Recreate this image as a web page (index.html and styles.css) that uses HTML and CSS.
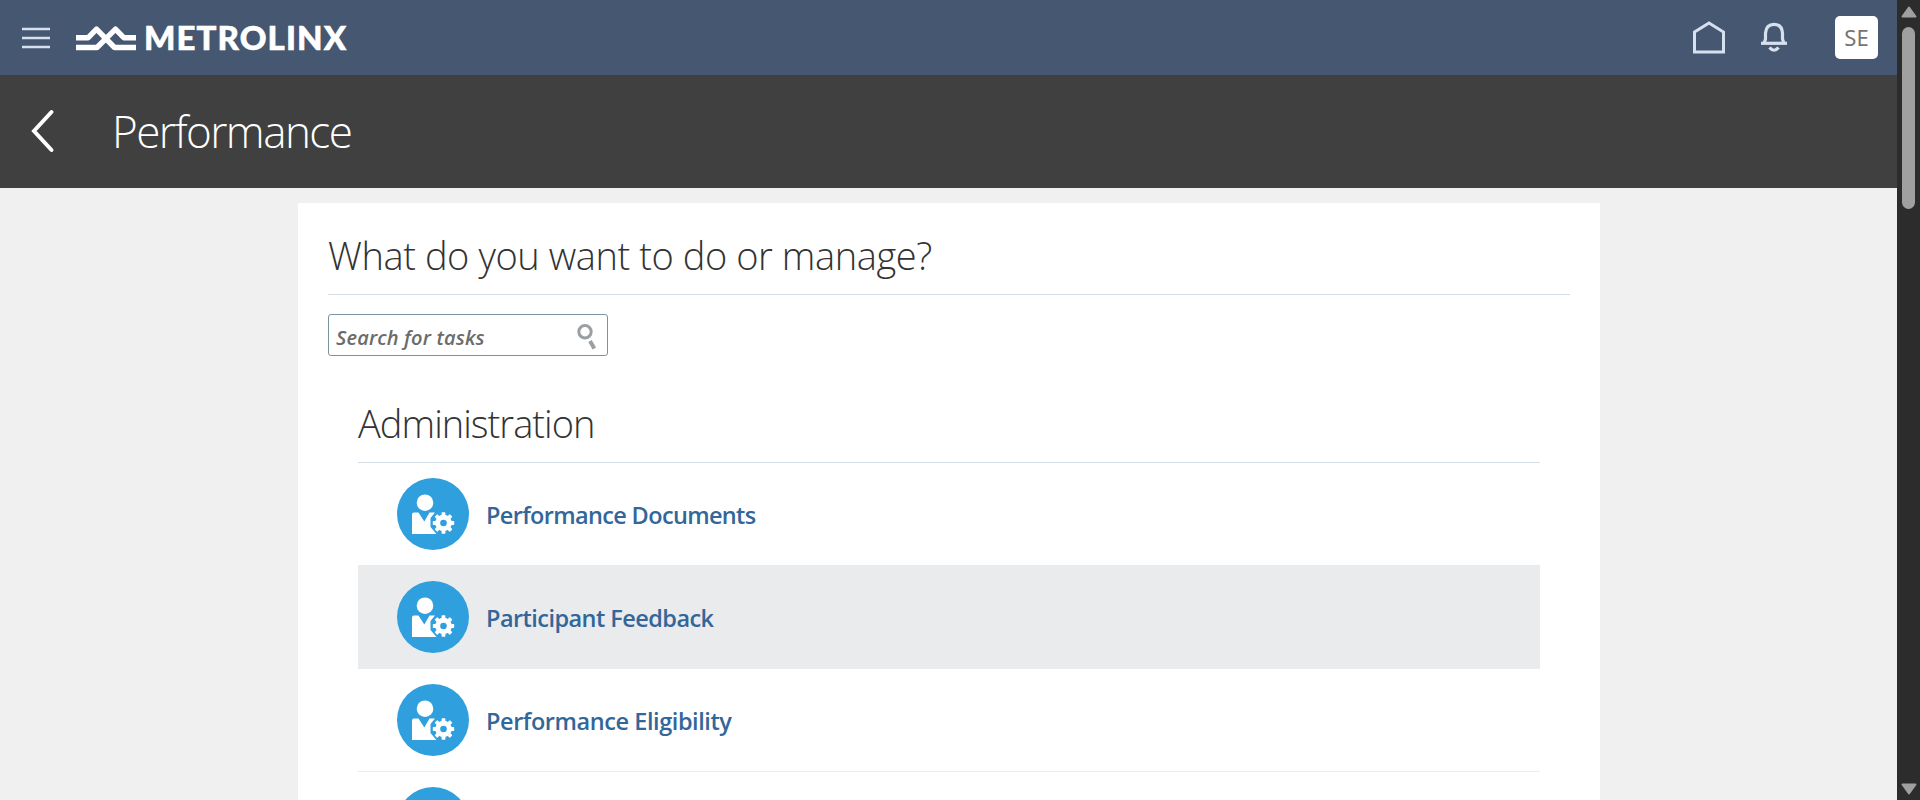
FILE: index.html
```html
<!DOCTYPE html>
<html lang="en">
<head>
<meta charset="utf-8">
<title>Performance</title>
<link rel="stylesheet" href="styles.css">
</head>
<body>
<svg class="defs" width="0" height="0" aria-hidden="true">
  <symbol id="person-gear" viewBox="0 0 72 72">
    <circle cx="36" cy="36" r="36" fill="#309fdd"/>
    <circle cx="28" cy="24.700" r="8.300" fill="#fff"/>
    <path d="M15 56V36.500Q15 34.500 17 34.500H21.500L27.300 43.500L32.500 34.500H38L33.500 40V49L39.500 56Z" fill="#fff"/>
    <g fill="#fff" transform="translate(46.500 45)">
      <circle r="8.300"/>
      <g><rect x="-1.900" y="-10.700" width="3.800" height="21.400" rx=".6"/><rect x="-10.700" y="-1.900" width="21.400" height="3.800" rx=".6"/></g>
      <g transform="rotate(45)"><rect x="-1.900" y="-10.700" width="3.800" height="21.400" rx=".6"/><rect x="-10.700" y="-1.900" width="21.400" height="3.800" rx=".6"/></g>
      <circle r="3.300" fill="#309fdd"/>
    </g>
  </symbol>
</svg>
<div class="screen">
  <div class="app">
    <header class="topbar">
      <svg class="menu" width="28" height="22" viewBox="0 0 28 22"><path d="M0 2H28M0 11H28M0 20H28" stroke="#d7e0ee" stroke-width="2.600"/></svg>
      <svg class="mark" width="62" height="28" viewBox="0 0 62 28"><path d="M1 13.800H13L21.500 5.200L39.500 23.500H61M1 23.500H22L40.500 5.200L49 13.800H61" fill="none" stroke="#fff" stroke-width="5.400" stroke-linejoin="round"/></svg>
      <span class="brand">METROLINX</span>
      <nav class="tools">
        <svg class="home" width="32" height="34" viewBox="0 0 32 34"><path d="M1.500 11L16 2L30.500 11V31H1.500Z" fill="none" stroke="#d7e0ee" stroke-width="3"/></svg>
        <svg class="bell" width="26" height="32" viewBox="0 0 26 32"><path d="M0 21.300H26" stroke="#d7e0ee" stroke-width="3.200"/><path d="M3.200 21L4.500 17V11C5 5 8.500 2.300 13 2.300S21 5 21.500 11V17L22.800 21" fill="none" stroke="#d7e0ee" stroke-width="3.200"/><path d="M8.500 25.500Q13 31 17.500 25.500" fill="none" stroke="#d7e0ee" stroke-width="3.200"/></svg>
        <span class="avatar">SE</span>
      </nav>
    </header>
    <div class="titlebar">
      <svg class="back" width="24" height="44" viewBox="0 0 24 44"><path d="M20.500 3L3 22L20.500 41" fill="none" stroke="#fff" stroke-width="4" stroke-linecap="round"/></svg>
      <h1 class="title">Performance</h1>
    </div>
    <main class="card">
      <h2 class="question">What do you want to do or manage?</h2>
      <div class="search">
        <span class="placeholder">Search for tasks</span>
        <svg width="20" height="26" viewBox="0 0 20 26"><circle cx="8" cy="7.700" r="6.200" fill="none" stroke="#9a9fa3" stroke-width="3"/><path d="M13 17L17.300 24.500" stroke="#9a9fa3" stroke-width="4"/></svg>
      </div>
      <section class="group">
        <h3 class="group-title">Administration</h3>
        <ul class="tasks">
          <li class="task"><svg class="icon"><use href="#person-gear"/></svg><a class="link wide">Performance Documents</a></li>
          <li class="task active"><svg class="icon"><use href="#person-gear"/></svg><a class="link">Participant Feedback</a></li>
          <li class="task"><svg class="icon"><use href="#person-gear"/></svg><a class="link narrow">Performance Eligibility</a></li>
          <li class="task"><svg class="icon"><use href="#person-gear"/></svg></li>
        </ul>
      </section>
    </main>
  </div>
  <div class="scrollbar">
    <svg width="16" height="12" viewBox="0 0 16 12"><path d="M8 1.500L14.500 10.500H1.500Z" fill="#a0a0a0" stroke="#a0a0a0" stroke-width="2" stroke-linejoin="round"/></svg>
    <div class="thumb"></div>
    <svg class="down" width="16" height="12" viewBox="0 0 16 12"><path d="M8 10.500L14.500 1.500H1.500Z" fill="#a0a0a0" stroke="#a0a0a0" stroke-width="2" stroke-linejoin="round"/></svg>
  </div>
</div>
</body>
</html>
```
FILE: styles.css
```css
* { box-sizing: border-box; }
body { margin: 0; overflow: hidden; font-family: "Open Sans", "Noto Sans", sans-serif; }
.defs { display: block; width: 0; height: 0; }
.screen { display: flex; height: 800px; overflow: hidden; background: #f0f0f0; }
.app { flex: 1; height: 800px; overflow: hidden; }
.topbar { display: flex; align-items: center; height: 75px; padding: 0 19px 0 22px; background: #465772; }
.menu { margin-top: 1px; }
.mark { margin-left: 25px; }
.brand { margin: 0 0 2px 7px; color: #fff; font: 900 33px/40px Lato, sans-serif; letter-spacing: 1.1px; white-space: nowrap; -webkit-text-stroke: 0.6px #fff; }
.tools { display: flex; align-items: center; margin-left: auto; }
.home { margin-right: 36px; }
.bell { margin-right: 48px; }
.avatar { width: 43px; height: 43px; border-radius: 5px; background: #fff; color: #757575; font: 22px/42px "Noto Sans", sans-serif; text-align: center; }
.titlebar { display: flex; align-items: center; height: 113px; padding: 0 0 2px 31px; background: #404040; }
.title { margin: 0 0 0 57px; color: #fff; font-size: 44px; font-weight: 300; line-height: 60px; letter-spacing: -1.55px; white-space: nowrap; }
.card { width: 1302px; height: 700px; margin: 15px 0 0 298px; padding: 0 30px; background: #fff; }
.question { height: 92px; margin: 0; padding-top: 25px; border-bottom: 1px solid #d6dfe6; color: #333; font-size: 38px; font-weight: 300; line-height: 54px; letter-spacing: -0.43px; white-space: nowrap; }
.search { display: flex; align-items: center; justify-content: space-between; width: 280px; height: 42px; margin-top: 19px; padding: 4px 10px 0 7px; border: 1px solid #7b929f; border-radius: 3px; color: #6b6b6b; font-size: 20px; font-style: italic; font-weight: 600; letter-spacing: 0.15px; white-space: nowrap; }
.group { margin: 0 30px; padding-top: 36px; }
.group-title { height: 71px; margin: 0; padding-top: 4px; border-bottom: 1px solid #d6dfe6; color: #333; font-size: 38px; font-weight: 300; line-height: 54px; letter-spacing: -0.96px; white-space: nowrap; }
.tasks { margin: 0; padding: 0; list-style: none; }
.task { display: flex; align-items: center; gap: 17px; height: 103px; padding: 0 0 1px 39px; border-bottom: 1px solid #eaebed; color: #336699; font-size: 23.5px; font-weight: 600; white-space: nowrap; }
.link { padding-top: 2px; letter-spacing: -0.55px; }
.wide { letter-spacing: -0.65px; }
.narrow { letter-spacing: -0.43px; }
.active { background: #eaebed; }
.icon { width: 72px; height: 72px; }
.scrollbar { display: flex; flex-direction: column; align-items: center; width: 23px; height: 800px; padding: 6px 0 5px; background: #2c2c2c; }
.thumb { width: 13px; height: 182px; margin-top: 9px; border-radius: 7px; background: #a0a0a0; }
.down { margin-top: auto; }
```
